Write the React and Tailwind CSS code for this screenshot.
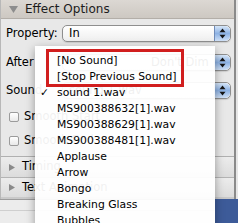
// Keynote-style inspector with an open sound popup menu

import React from 'react';

const sounds = [
  '[No Sound]',
  '[Stop Previous Sound]',
  'sound 1.wav',
  'MS900388632[1].wav',
  'MS900388629[1].wav',
  'MS900388481[1].wav',
  'Applause',
  'Arrow',
  'Bongo',
  'Breaking Glass',
  'Bubbles',
  'Buzzer',
];

const Stepper = () => (
  <div className="w-[16px] rounded-r-[5px] border-l border-[#6f8bb8] bg-gradient-to-b from-[#d6e6f8] via-[#8db2e4] to-[#cfe0f6] flex items-center justify-center">
    <svg width="7" height="11" viewBox="0 0 7 11">
      <path d="M3.5 0.5L6.5 4.2H0.5z" fill="#151515" />
      <path d="M3.5 10.5L6.5 6.8H0.5z" fill="#151515" />
    </svg>
  </div>
);

const Popup = ({ children, indent = 'pl-[6px]' }) => (
  <div className="flex-1 h-[17px] flex rounded-[5px] border border-[#8e8e8e] bg-gradient-to-b from-white to-[#efefef] shadow-[0_1px_1px_rgba(0,0,0,0.12)] overflow-hidden">
    <div className={`flex-1 ${indent} text-[11.5px] leading-[15px] text-black whitespace-nowrap overflow-hidden`}>
      {children}
    </div>
    <Stepper />
  </div>
);

const Checkbox = ({ label }) => (
  <div className="flex items-center gap-[5px] h-[10px] pl-[2px]">
    <span className="w-[10px] h-[10px] rounded-[2px] border border-[#9b9b9b] bg-gradient-to-b from-white to-[#e9e9e9]" />
    <span className="text-[11.5px] text-black whitespace-nowrap">{label}</span>
  </div>
);

const Disclosure = ({ label, border }) => (
  <div
    className={`h-[20px] flex items-center gap-[7px] pl-[8px] bg-gradient-to-b from-[#ececec] to-[#dcdcdc] ${border}`}
  >
    <svg width="6" height="7" viewBox="0 0 6 7">
      <path d="M0 0L6 3.5L0 7z" fill="#8a8a8a" />
    </svg>
    <span className="text-[11.5px] text-black whitespace-nowrap">{label}</span>
  </div>
);

export default function App() {
  return (
    <div className='relative w-[238px] h-[223px] overflow-hidden bg-[#e6e6e6] font-["DejaVu_Sans",sans-serif]'>
      <div className="h-[199px] w-[236px] flex flex-col border-l border-r-2 border-[#8a8a8a] border-l-[#b8b8b8] bg-[#e8e8e8]">
        {/* header */}
        <div className="h-[19px] flex items-center gap-[7px] pl-[8px] bg-gradient-to-b from-[#dcd8d3] to-[#cdc8c2] border-b border-[#b3aea8]">
          <svg width="9" height="7" viewBox="0 0 9 7">
            <path d="M0 0H9L4.5 7z" fill="#8d8d8d" />
          </svg>
          <span className="text-[12px] text-[#1c1c1c]">Effect Options</span>
        </div>

        <div className="flex flex-col pt-[6px] pr-[3px]">
          <div className="flex items-center h-[17px]">
            <span className="w-[61px] pl-[5px] text-[11.5px] text-black">Property:</span>
            <Popup>In</Popup>
          </div>
          <div className="flex items-center h-[17px] mt-[12px]">
            <span className="w-[61px] pl-[5px] text-[11.5px] text-black">After</span>
            <Popup indent="pl-[88px] text-[#a8a8a8]">Don't Dim</Popup>
          </div>
          <div className="flex items-center h-[17px] mt-[11px]">
            <span className="w-[61px] pl-[5px] text-[11.5px] text-black">Sound</span>
            <Popup>sound 1.wav</Popup>
          </div>
          <div className="flex flex-col gap-[14px] mt-[13px] pl-[6px]">
            <Checkbox label="Smooth Start" />
            <Checkbox label="Smooth End" />
          </div>
        </div>

        <div className="mt-auto flex flex-col border-t border-[#b0b0b0]">
          <Disclosure label="Timing" border="" />
          <Disclosure label="Text Animation" border="border-t border-[#b4b4b4]" />
          <div className="h-[2px] bg-[#c9c9c9]" />
        </div>
      </div>

      {/* below the inspector */}
      <div className="h-[24px] flex">
        <div className="flex-1 flex flex-col border-t border-[#9c9c9c] bg-[#ececec]">
          <div className="h-[11px] border-b border-[#cfcfcf]" />
        </div>
        <div className="w-[23px] bg-[#3d5b99]" />
      </div>

      {/* open popup menu */}
      <div className="absolute left-[35px] top-[46px] w-[180px] h-[200px] bg-white/[0.94] shadow-[0_3px_9px_rgba(0,0,0,0.35)] pt-[7px]">
        {sounds.map((s) => (
          <div key={s} className="relative h-[16px] leading-[16px] pl-[22px] text-[10.8px] text-black whitespace-nowrap">
            {s === 'sound 1.wav' && <span className="absolute left-[5px] top-0">✓</span>}
            {s}
          </div>
        ))}
        <div className="absolute left-[11px] top-[3px] w-[138px] h-[38px] border-[3px] border-[#d11e1e]" />
      </div>
    </div>
  );
}
